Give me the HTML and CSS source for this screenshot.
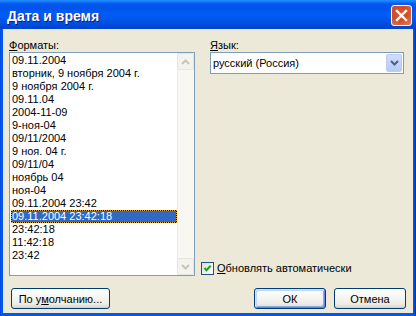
FILE: index.html
```html
<!DOCTYPE html>
<html lang="ru">
<head>
<meta charset="utf-8">
<title>Дата и время</title>
<link rel="stylesheet" href="styles.css">
</head>
<body>
<div class="window">
  <div class="titlebar">
    <span class="title">Дата и время</span>
    <button class="close" aria-label="Закрыть">
      <svg width="19" height="19" viewBox="0 0 19 19"><path d="M5 5 L14 14 M14 5 L5 14" stroke="#fff" stroke-width="2.4" stroke-linecap="square"/></svg>
    </button>
  </div>
  <div class="client">
    <div class="panes">
      <div class="col-left">
        <div class="label"><u>Ф</u>орматы:</div>
        <div class="listbox">
          <ul class="items">
            <li>09.11.2004</li>
            <li>вторник, 9 ноября 2004 г.</li>
            <li>9 ноября 2004 г.</li>
            <li>09.11.04</li>
            <li>2004-11-09</li>
            <li>9-ноя-04</li>
            <li>09/11/2004</li>
            <li>9 ноя. 04 г.</li>
            <li>09/11/04</li>
            <li>ноябрь 04</li>
            <li>ноя-04</li>
            <li>09.11.2004 23:42</li>
            <li class="selected">09.11.2004 23:42:18</li>
            <li>23:42:18</li>
            <li>11:42:18</li>
            <li>23:42</li>
          </ul>
          <div class="vscroll">
            <div class="sbtn"><svg width="9" height="6" viewBox="0 0 9 6"><path d="M1 5 L4.5 1.5 L8 5" fill="none" stroke="#C8C6B9" stroke-width="2"/></svg></div>
            <div class="sbtn"><svg width="9" height="6" viewBox="0 0 9 6"><path d="M1 1 L4.5 4.5 L8 1" fill="none" stroke="#C8C6B9" stroke-width="2"/></svg></div>
          </div>
        </div>
      </div>
      <div class="col-right">
        <div class="label indent"><u>Я</u>зык:</div>
        <div class="combo indent">
          <span class="combo-text">русский (Россия)</span>
          <div class="dropbtn"><svg width="9" height="6" viewBox="0 0 9 6"><path d="M1 1 L4.5 4.5 L8 1" fill="none" stroke="#4D6185" stroke-width="2"/></svg></div>
        </div>
        <div class="check">
          <span class="box"><svg width="11" height="11" viewBox="0 0 11 11"><path d="M2.5 5 L4.5 7.2 L8.6 2.8" fill="none" stroke="#21A121" stroke-width="2"/></svg></span>
          <span class="check-label"><u>О</u>бновлять автоматически</span>
        </div>
      </div>
    </div>
    <div class="buttons">
      <button class="btn wide">По у<u>м</u>олчанию...</button>
      <span class="spacer"></span>
      <button class="btn default">ОК</button>
      <button class="btn">Отмена</button>
    </div>
  </div>
</div>
</body>
</html>
```

FILE: styles.css
```css
html, body {
  margin: 0;
  padding: 0;
}
body {
  background: #ECE9D8;
  font-family: "Liberation Sans", Arial, sans-serif;
  font-size: 11px;
  color: #000;
}
.window {
  width: 416px;
  height: 316px;
  display: flex;
  flex-direction: column;
  background: linear-gradient(to right, #0842D8 0, #0058EE 1px, #0058EE 414px, #001EA0 416px);
}
.titlebar {
  height: 29px;
  flex: none;
  display: flex;
  align-items: flex-start;
  padding: 0 4px 0 7px;
  background: linear-gradient(to bottom, #0997FF 0, #2A7BFA 1px, #0058EE 4px, #0054EA 8px, #005CF5 14px, #0056EC 20px, #004ADA 25px, #0042CC 29px);
}
.title {
  flex: 1;
  margin-top: 8px;
  line-height: 17px;
  color: #fff;
  font-family: "Liberation Sans", Arial, sans-serif;
  font-weight: bold;
  font-size: 14px;
  text-shadow: 1px 1px 0 #0A1E8C;
}
.close {
  margin-top: 5px;
  width: 21px;
  height: 21px;
  padding: 0;
  border: 1px solid #fff;
  border-radius: 3px;
  background: radial-gradient(circle at 40% 35%, #D9542E 0, #D24A22 45%, #E2825F 100%);
  display: flex;
  align-items: center;
  justify-content: center;
}
.close svg {
  display: block;
}
.client {
  flex: 1;
  background: #ECE9D8;
  margin: 0 3px 3px 3px;
  display: flex;
  flex-direction: column;
}
.panes {
  display: flex;
  padding: 10px 0 0 6px;
}
.col-left {
  width: 186px;
  display: flex;
  flex-direction: column;
}
.label {
  height: 13px;
  line-height: 13px;
}
.listbox {
  height: 224px;
  box-sizing: border-box;
  border: 1px solid #7F9DB9;
  background: #fff;
  display: flex;
}
.items {
  flex: 1;
  list-style: none;
  margin: 0;
  padding: 1px 0 0 1px;
}
.items li {
  height: 13px;
  line-height: 13px;
  padding-left: 1px;
  white-space: nowrap;
}
.items li.selected {
  background: #316AC5;
  color: #fff;
  box-shadow: inset 0 0 0 1px #000;
  outline: 1px dotted #E4A83C;
  outline-offset: -1px;
}
.vscroll {
  width: 17px;
  display: flex;
  flex-direction: column;
  justify-content: space-between;
  background: #F8F7F2;
  box-shadow: inset 1px 0 0 #EEEDE5;
}
.sbtn {
  width: 17px;
  height: 17px;
  box-sizing: border-box;
  border: 1px solid #E8E6DC;
  border-radius: 2px;
  background: #F4F3EE;
  display: flex;
  align-items: center;
  justify-content: center;
}
.sbtn svg {
  display: block;
}
.col-right {
  width: 203px;
  margin-left: 6px;
  display: flex;
  flex-direction: column;
}
.indent {
  margin-left: 9px;
}
.combo {
  height: 22px;
  box-sizing: border-box;
  border: 1px solid #7F9DB9;
  background: #fff;
  display: flex;
  align-items: center;
}
.combo-text {
  flex: 1;
  padding-left: 2px;
}
.dropbtn {
  width: 16px;
  height: 18px;
  margin: 1px;
  box-sizing: border-box;
  border: 1px solid #BACBF4;
  border-radius: 2px;
  background: linear-gradient(to bottom, #CFDCFD, #B8CBF6);
  display: flex;
  align-items: center;
  justify-content: center;
}
.dropbtn svg {
  display: block;
}
.check {
  margin-top: auto;
  margin-bottom: 1px;
  display: flex;
  align-items: center;
  height: 13px;
}
.box {
  width: 13px;
  height: 13px;
  box-sizing: border-box;
  border: 1px solid #1C5180;
  background: linear-gradient(135deg, #DCDCD7, #FFFFFF);
  display: flex;
  align-items: center;
  justify-content: center;
}
.box svg {
  display: block;
}
.check-label {
  margin-left: 3px;
  line-height: 13px;
}
.buttons {
  display: flex;
  margin-top: 12px;
  padding: 0 7px 0 8px;
  gap: 8px;
}
.spacer {
  flex: 1;
}
.btn {
  width: 72px;
  height: 21px;
  padding: 0;
  box-sizing: border-box;
  border: 1px solid #003C74;
  border-radius: 3px;
  background: linear-gradient(to bottom, #FFFFFF 0, #F6F6F3 40%, #ECEBE6 80%, #D6D0C5 100%);
  font-family: "Liberation Sans", Arial, sans-serif;
  font-size: 11px;
  color: #000;
}
.btn.wide {
  width: 99px;
}
.btn.default {
  box-shadow: inset 1px 1px 0 #CEE7FF, inset -1px -1px 0 #6982EE, inset 2px 2px 0 #BCD4F6, inset -2px -2px 0 #89ADE4;
}
```
